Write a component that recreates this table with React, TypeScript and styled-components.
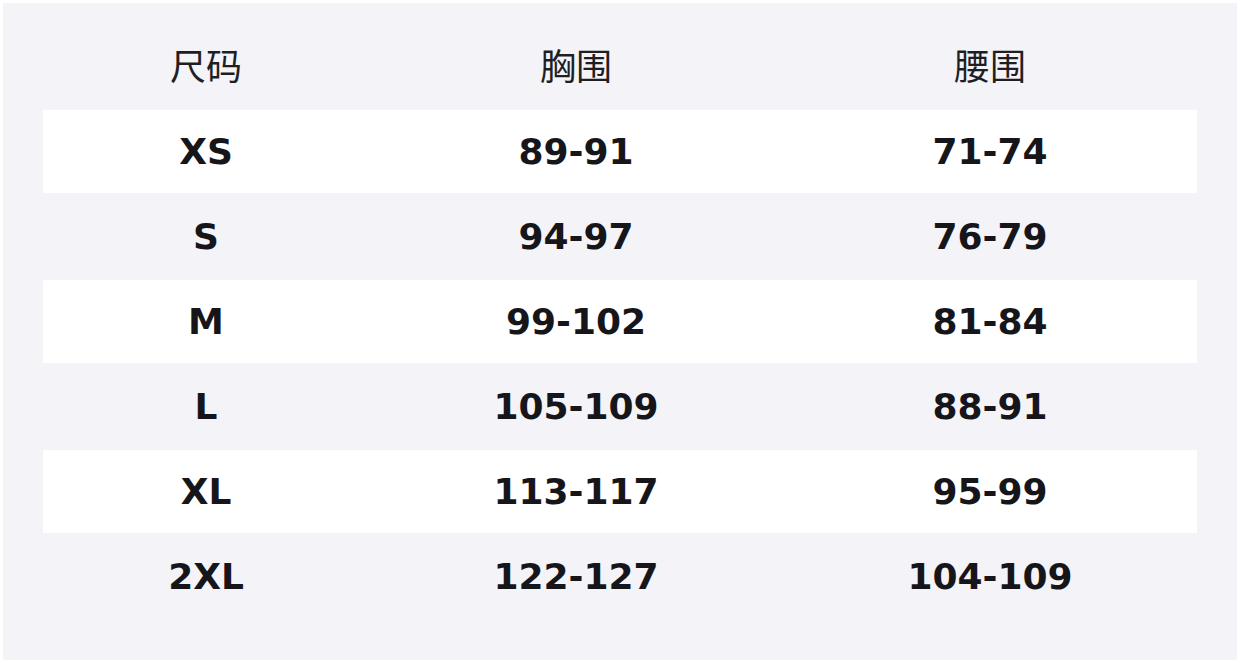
import React from 'react'
import styled, { createGlobalStyle } from 'styled-components'

const GlobalStyle = createGlobalStyle`
  html, body {
    margin: 0;
    padding: 0;
    background: #ffffff;
  }
  body {
    font-family: "DejaVu Sans", "Noto Sans CJK SC", sans-serif;
  }
`

const SPage = styled.div`
  width: 1240px;
  height: 663px;
  padding: 3px;
  box-sizing: border-box;
`

const SPanel = styled.div`
  height: 657px;
  box-sizing: border-box;
  background: #f3f3f8;
  padding: 22px 40px 40px;
  display: flex;
  flex-direction: column;
  gap: 2px;
`

const SRow = styled.div<{ $white?: boolean }>`
  display: grid;
  grid-template-columns: 326px 414px 414px;
  height: 83px;
  background: ${(p) => (p.$white ? '#ffffff' : 'transparent')};
`

const SHeadCell = styled.div`
  display: flex;
  align-items: center;
  justify-content: center;
  padding-bottom: 6px;
  font-family: "DejaVu Sans", "Noto Sans CJK SC", sans-serif;
  font-size: 36px;
  font-weight: 400;
  color: #1f1f23;
`

const SCell = styled.div`
  display: flex;
  align-items: center;
  justify-content: center;
  font-family: "DejaVu Sans", sans-serif;
  font-size: 36px;
  font-weight: 700;
  color: #16161a;
`

const rows = [
  ['XS', '89-91', '71-74'],
  ['S', '94-97', '76-79'],
  ['M', '99-102', '81-84'],
  ['L', '105-109', '88-91'],
  ['XL', '113-117', '95-99'],
  ['2XL', '122-127', '104-109'],
]

function App() {
  return (
    <SPage>
      <GlobalStyle />
      <SPanel>
        <SRow>
          <SHeadCell>尺码</SHeadCell>
          <SHeadCell>胸围</SHeadCell>
          <SHeadCell>腰围</SHeadCell>
        </SRow>
        {rows.map((r, i) => (
          <SRow key={r[0]} $white={i % 2 === 0}>
            {r.map((c, j) => (
              <SCell key={j}>{c}</SCell>
            ))}
          </SRow>
        ))}
      </SPanel>
    </SPage>
  )
}

export default App
